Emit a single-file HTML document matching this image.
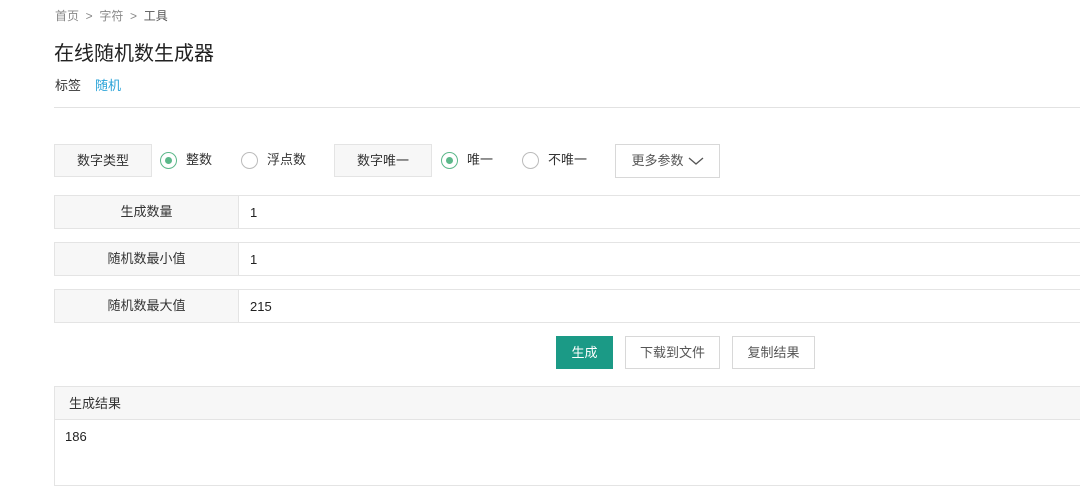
<!DOCTYPE html>
<html><head><meta charset="utf-8"><style>
*{margin:0;padding:0;box-sizing:border-box}
body{width:1080px;height:473px;overflow:hidden;background:#fff;font-family:"Liberation Sans","Noto Sans CJK SC",sans-serif;color:#333;position:relative}
.a{position:absolute;white-space:nowrap}
.crumb{top:7px;left:55px;font-size:12px;color:#888}
.crumb b{font-weight:normal;color:#555}
.title{top:37px;left:54px;font-size:20px;color:#222}
.tag{top:75px;left:55px;font-size:13px;color:#333}
.tag span{color:#2aa3d8;margin-left:14px}
.hr{top:107px;left:54px;width:1030px;height:1px;background:#e2e2e2}
.lb{background:#f7f7f7;border:1px solid #e4e4e4;font-size:13px;line-height:31px;text-align:center;color:#333}
.radio{width:17px;height:17px;border-radius:50%;border:1px solid #bbb;background:#fff}
.radio.on{border-color:#5cb88a}
.radio.on:after{content:"";position:absolute;left:4px;top:4px;width:7px;height:7px;border-radius:50%;background:#5cb88a}
.rt{font-size:13px;color:#333;line-height:16px}
.btn{border:1px solid #d8d8d8;background:#fff;font-size:13px;color:#555;display:flex;align-items:center;justify-content:center;line-height:16px}
.row{left:54px;width:1040px;height:34px;border:1px solid #e4e4e4;background:#fff}
.row .l{position:absolute;left:0;top:0;width:184px;height:32px;background:#f7f7f7;border-right:1px solid #e4e4e4;font-size:13px;line-height:31px;text-align:center}
.row .v{position:absolute;left:195px;top:9px;font-size:13px;color:#222}
</style></head><body>
<div class="a crumb">首页 &nbsp;&gt;&nbsp; 字符 &nbsp;&gt;&nbsp; <b>工具</b></div>
<div class="a title">在线随机数生成器</div>
<div class="a tag">标签<span>随机</span></div>
<div class="a hr"></div>

<div class="a lb" style="left:54px;top:144px;width:98px;height:33px">数字类型</div>
<div class="a radio on" style="left:160px;top:152px"></div>
<div class="a rt" style="left:186px;top:152px">整数</div>
<div class="a radio" style="left:241px;top:152px"></div>
<div class="a rt" style="left:267px;top:152px">浮点数</div>
<div class="a lb" style="left:334px;top:144px;width:98px;height:33px">数字唯一</div>
<div class="a radio on" style="left:441px;top:152px"></div>
<div class="a rt" style="left:467px;top:152px">唯一</div>
<div class="a radio" style="left:522px;top:152px"></div>
<div class="a rt" style="left:548px;top:152px">不唯一</div>
<div class="a btn" style="left:615px;top:144px;width:105px;height:34px">更多参数 <svg width="16" height="10" viewBox="0 0 16 10" style="margin-left:4px"><path d="M1 2 L8 8 L15 2" fill="none" stroke="#555" stroke-width="1.3"/></svg></div>

<div class="a row" style="top:195px"><div class="l">生成数量</div><div class="v">1</div></div>
<div class="a row" style="top:242px"><div class="l">随机数最小值</div><div class="v">1</div></div>
<div class="a row" style="top:289px"><div class="l">随机数最大值</div><div class="v">215</div></div>

<div class="a btn" style="left:556px;top:336px;width:57px;height:33px;background:#1b9a86;border-color:#1b9a86;color:#fff">生成</div>
<div class="a btn" style="left:625px;top:336px;width:95px;height:33px">下载到文件</div>
<div class="a btn" style="left:732px;top:336px;width:83px;height:33px">复制结果</div>

<div class="a" style="left:54px;top:386px;width:1040px;height:100px;border:1px solid #e4e4e4">
<div style="height:33px;background:#f7f7f7;border-bottom:1px solid #e4e4e4;font-size:13px;line-height:16px;padding:9px 0 0 14px">生成结果</div>
<div style="font-size:13px;padding:9px 0 0 10px;color:#222">186</div>
</div>
</body></html>
